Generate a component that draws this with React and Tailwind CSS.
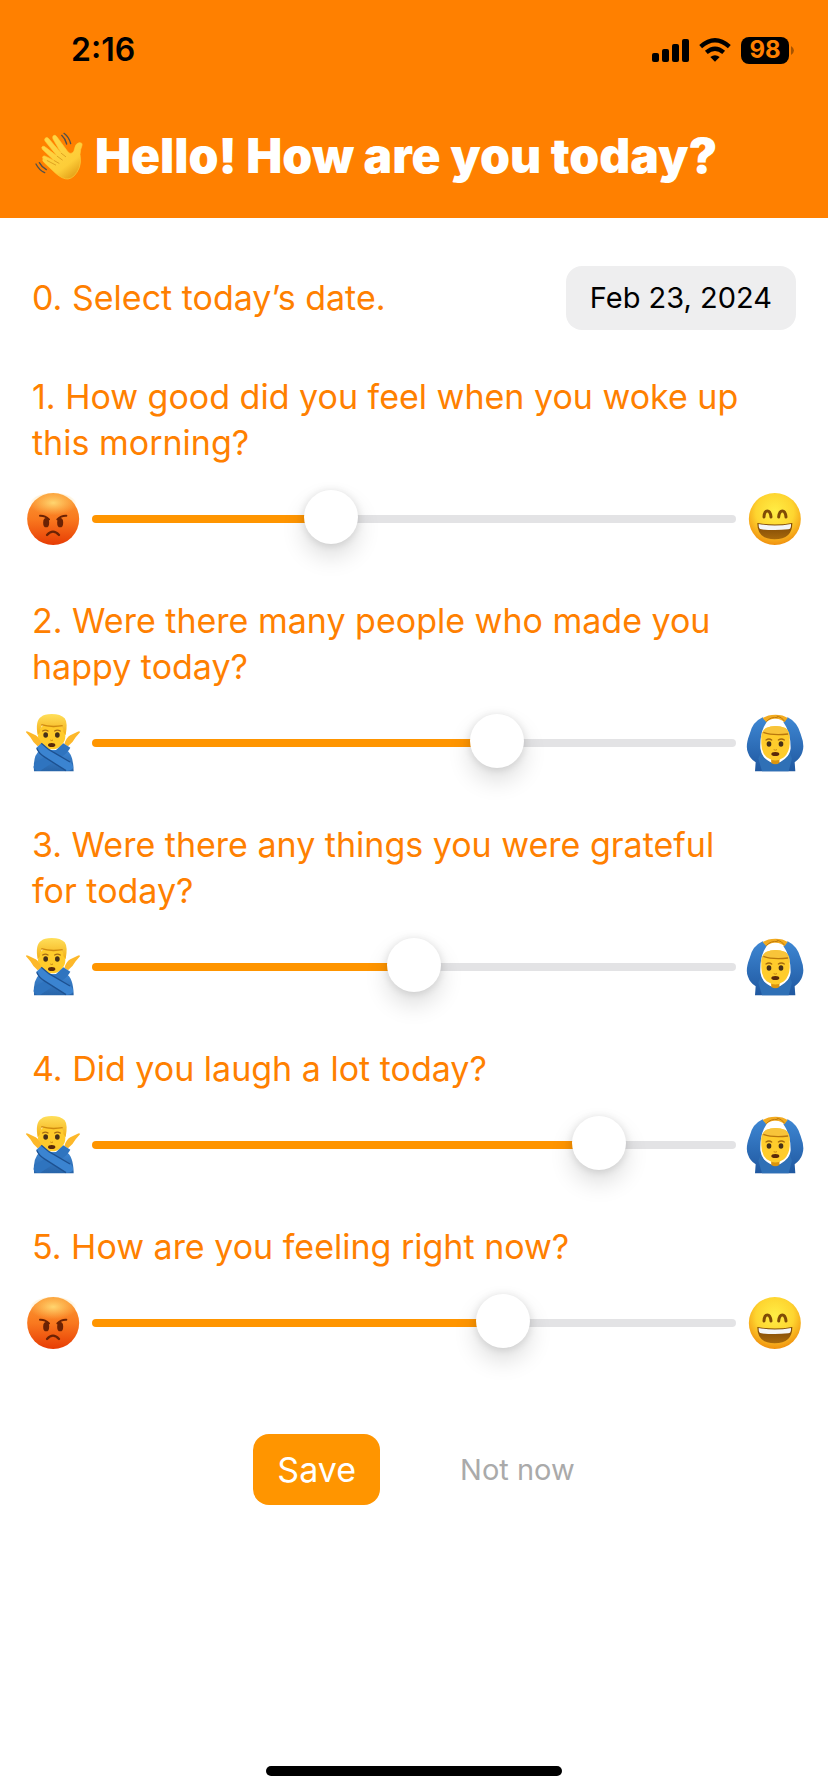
import { useState } from "react";

const EMOJI = "h-[58px] w-[54px] shrink-0 overflow-visible";

function WavingHand() {
  return (
    <svg viewBox="45 38 144 144" className="size-12 shrink-0" aria-hidden="true">
      <defs>
        <linearGradient id="handFill" x1="0" y1="0" x2="0.7" y2="1">
          <stop offset="0" stopColor="#ffd84a" />
          <stop offset="0.75" stopColor="#fdcd38" />
          <stop offset="1" stopColor="#e5a31a" />
        </linearGradient>
      </defs>
      <path
        d="M107 137 L71 120 Q65 115 69 111 Q73 108 79 112 L103 124 L67 90 Q63 84 68 81 Q72 79 77 84 L112 111 L75 65 Q72 57 78 55 Q83 53 87 59 L124 102 L99 59 Q96 51 102 48 Q107 46 111 53 L144 98 Q150 105 157 101 Q163 97 164 87 Q166 73 177 70 Q188 69 186 78 Q181 90 180 105 Q184 130 178 145 Q165 176 144 179 Q128 180 107 162 L73 130 Q66 124 69 118 Z"
        fill="url(#handFill)"
        stroke="#fdcd38"
        strokeWidth="2"
        strokeLinejoin="round"
      />
      <path d="M107 137 L82 124 M112 111 L127 122 M124 102 L137 112 M103 124 L117 132" stroke="#dfa322" strokeWidth="3" strokeLinecap="round" fill="none" />
      <path d="M125 48 Q136 58 140 74 M132 42 Q147 53 152 73 M58 130 Q65 143 79 151 M48 134 Q57 152 74 160" stroke="#54504a" strokeWidth="4" strokeLinecap="round" fill="none" />
    </svg>
  );
}

function AngryFace() {
  return (
    <svg viewBox="48 26 162 174" className={EMOJI} aria-hidden="true">
      <defs>
        <linearGradient id="angryFill" x1="0" y1="0" x2="0" y2="1">
          <stop offset="0" stopColor="#fb9a35" />
          <stop offset="0.5" stopColor="#f9791f" />
          <stop offset="1" stopColor="#e73c04" />
        </linearGradient>
        <radialGradient id="angryShine" cx="0.5" cy="0.4" r="0.5">
          <stop offset="0" stopColor="#ffd670" />
          <stop offset="1" stopColor="#ffc860" stopOpacity="0" />
        </radialGradient>
      </defs>
      <circle cx="129.500" cy="113" r="78" fill="url(#angryFill)" />
      <ellipse cx="129.500" cy="72" rx="72" ry="38" fill="url(#angryShine)" />
      <ellipse cx="108.500" cy="124" rx="9" ry="14" fill="#6b2204" />
      <ellipse cx="150.500" cy="124" rx="9" ry="14" fill="#6b2204" />
      <path d="M90 103 Q105 102 117 114 M169 103 Q154 102 142 114" stroke="#6b2204" strokeWidth="6" strokeLinecap="round" fill="none" />
      <path d="M111 161 Q129 141 147 161" stroke="#6b2204" strokeWidth="7" strokeLinecap="round" fill="none" />
    </svg>
  );
}

function GrinningFace() {
  return (
    <svg viewBox="39 26 162 174" className={EMOJI} aria-hidden="true">
      <defs>
        <radialGradient id="grinFill" cx="0.5" cy="0.36" r="0.66">
          <stop offset="0" stopColor="#ffee45" />
          <stop offset="0.55" stopColor="#fed530" />
          <stop offset="1" stopColor="#f08c0c" />
        </radialGradient>
        <linearGradient id="grinMouth" x1="0" y1="0" x2="0" y2="1">
          <stop offset="0" stopColor="#7a4505" />
          <stop offset="1" stopColor="#a8690c" />
        </linearGradient>
      </defs>
      <circle cx="119.500" cy="113" r="78" fill="url(#grinFill)" />
      <path d="M87 107 Q88 89 97 89 Q106 89 108 107 M131 107 Q133 89 142 89 Q151 89 153 107" stroke="#804c06" strokeWidth="9" strokeLinecap="round" fill="none" />
      <path d="M67 125 Q119 134 172 125 Q172 174 119 174 Q67 174 67 125 Z" fill="url(#grinMouth)" />
      <path d="M71 128 Q119 137 168 128 Q169 143 160 144 Q119 148 79 144 Q70 143 71 128 Z" fill="#f4f6f8" />
    </svg>
  );
}

function PersonGesturingNo() {
  return (
    <svg viewBox="48 42 162 174" className={EMOJI} aria-hidden="true">
      <defs>
        <linearGradient id="noShirt" x1="0" y1="0" x2="0" y2="1">
          <stop offset="0" stopColor="#3d86d3" />
          <stop offset="1" stopColor="#2864a8" />
        </linearGradient>
        <linearGradient id="noHair" x1="0" y1="0" x2="0" y2="1">
          <stop offset="0" stopColor="#ffdf5a" />
          <stop offset="1" stopColor="#f3ae17" />
        </linearGradient>
      </defs>
      <path d="M72 214 Q68 166 90 150 L168 150 Q190 160 191 214 Z" fill="url(#noShirt)" />
      <ellipse cx="125" cy="108" rx="41" ry="40" fill="#ffcb2b" />
      <path d="M83 106 Q75 60 94 50 Q102 42 125 42 Q152 42 164 55 Q174 68 167 106 L160 96 Q160 84 154 80 Q120 86 96 76 Q90 88 89 98 Z" fill="url(#noHair)" />
      <path d="M94 74 Q122 83 158 77" stroke="#cf8a10" strokeWidth="4" fill="none" />
      <path d="M98 93 Q106 88 114 93 M134 93 Q142 88 151 93" stroke="#a86c12" strokeWidth="4" strokeLinecap="round" fill="none" />
      <ellipse cx="107" cy="105" rx="7" ry="8" fill="#463019" />
      <ellipse cx="142" cy="105" rx="7" ry="8" fill="#463019" />
      <path d="M121 120 Q125 123 129 120" stroke="#c98512" strokeWidth="3" fill="none" />
      <ellipse cx="125" cy="135" rx="11" ry="6" fill="#5b2909" />
      <path d="M94 132 L83 139 Q68 126 61 112 L48 97 Q48 91 55 95 L77 106 Q88 112 94 132 Z" fill="#fdb82a" />
      <path d="M163 132 L174 139 Q190 126 197 112 L210 97 Q209 91 203 95 L181 106 Q169 112 163 132 Z" fill="#fdb82a" />
      <path d="M160 130 L181 143 Q172 160 155 170 L91 212 Q76 214 71 203 Q69 194 80 186 L139 149 Z" fill="#2f74bf" />
      <path d="M94 130 L79 143 Q88 162 102 170 L168 212 Q183 214 189 204 Q191 194 180 186 L117 149 Z" fill="#3b84d1" />
      <path d="M94 130 L117 149 L180 186 M80 145 Q88 162 102 170 L168 212" stroke="#1d5191" strokeWidth="4" fill="none" />
    </svg>
  );
}

function PersonGesturingOk() {
  return (
    <svg viewBox="39 42 162 174" className={EMOJI} aria-hidden="true">
      <defs>
        <linearGradient id="okShirt" x1="0" y1="0" x2="0" y2="1">
          <stop offset="0" stopColor="#3e87d3" />
          <stop offset="1" stopColor="#2058a0" />
        </linearGradient>
      </defs>
      <path d="M83 52 Q52 66 44 102 Q30 138 39 158 Q45 176 62 187 L60 214 L181 214 L179 187 Q197 174 202 157 Q210 136 197 102 Q187 66 158 52 L145 66 Q167 96 167 145 Q162 184 121 192 Q81 184 76 145 Q74 96 95 66 Z" fill="url(#okShirt)" />
      <path d="M77 158 Q88 180 121 193 Q153 180 165 158 L171 176 L161 214 L81 214 L70 176 Z" fill="#2f70b6" />
      <path d="M108 174 L134 174 L133 189 Q121 197 109 189 Z" fill="#dc950d" />
      <path d="M83 54 Q99 44 121 44 Q145 44 158 54 L148 67 Q137 55 121 56 Q105 55 94 67 Z" fill="#f2ab20" />
      <path d="M94 65 Q108 49 128 53 M125 48 Q140 50 149 64" stroke="#c07a0c" strokeWidth="3" fill="none" />
      <path d="M79 132 Q77 94 93 84 Q122 72 151 84 Q166 94 164 132 Q163 157 147 172 Q121 191 95 172 Q79 157 79 132 Z" fill="#ffcc2c" />
      <path d="M79 116 Q77 94 93 84 Q121 72 151 84 Q166 94 164 118 L157 103 Q118 110 86 100 Z" fill="#f8c43a" />
      <path d="M85 97 Q112 107 159 102" stroke="#b9770c" strokeWidth="4" fill="none" />
      <path d="M93 120 Q102 114 110 120 M130 120 Q139 114 148 120" stroke="#a66b0d" strokeWidth="4" strokeLinecap="round" fill="none" />
      <ellipse cx="102" cy="132" rx="7" ry="8" fill="#463019" />
      <ellipse cx="138" cy="132" rx="7" ry="8" fill="#463019" />
      <path d="M116 149 Q121 152 126 149" stroke="#c98512" strokeWidth="3" fill="none" />
      <ellipse cx="121" cy="162" rx="12" ry="6" fill="#5b2909" />
    </svg>
  );
}

const QUESTIONS = [
  { id: "q1", text: "1. How good did you feel when you woke up this morning?", value: 36, mood: true },
  { id: "q2", text: "2. Were there many people who made you happy today?", value: 64, mood: false },
  { id: "q3", text: "3. Were there any things you were grateful for today?", value: 50, mood: false },
  { id: "q4", text: "4. Did you laugh a lot today?", value: 81.4, mood: false },
  { id: "q5", text: "5. How are you feeling right now?", value: 65, mood: true },
];

function Question({ id, text, initial, mood }) {
  const [value, setValue] = useState(initial);
  return (
    <div className="flex flex-col gap-[26px]">
      <label htmlFor={id} className="max-w-[740px] pl-8 text-[34px] leading-[46px] text-[#ff8000]">
        {text}
      </label>
      <div className="flex h-[54px] items-center gap-3 px-[26px]">
        {mood ? <AngryFace /> : <PersonGesturingNo />}
        <input
          id={id}
          type="range"
          min="0"
          max="100"
          step="any"
          value={value}
          onChange={(e) => setValue(Number(e.target.value))}
          style={{ "--fill": `calc(27px + (100% - 54px) * ${value / 100})` }}
          className="h-[54px] min-w-0 flex-1 appearance-none bg-transparent [&::-webkit-slider-runnable-track]:h-2 [&::-webkit-slider-runnable-track]:rounded-full [&::-webkit-slider-runnable-track]:bg-[linear-gradient(to_right,#ff9500_var(--fill),#e3e3e5_var(--fill))] [&::-webkit-slider-thumb]:-mt-[25px] [&::-webkit-slider-thumb]:size-[54px] [&::-webkit-slider-thumb]:appearance-none [&::-webkit-slider-thumb]:rounded-full [&::-webkit-slider-thumb]:bg-white [&::-webkit-slider-thumb]:shadow-[0_1px_8px_rgba(0,0,0,0.12),0_12px_24px_rgba(0,0,0,0.14)]"
        />
        {mood ? <GrinningFace /> : <PersonGesturingOk />}
      </div>
    </div>
  );
}

function StatusBar() {
  return (
    <div className="flex h-[100px] items-center justify-between pr-[34px] pl-[71px] text-black">
      <span className="text-[32px] leading-10 font-semibold">2:16</span>
      <div className="flex items-center gap-[10px]">
        <svg viewBox="0 0 37 23" className="h-[23px] w-[37px]" aria-label="Signal" role="img">
          <rect x="0" y="14" width="7" height="9" rx="2" />
          <rect x="10" y="10" width="7" height="13" rx="2" />
          <rect x="20" y="5" width="7" height="18" rx="2" />
          <rect x="30" y="0" width="7" height="23" rx="2" />
        </svg>
        <svg viewBox="0 0 96 72" className="h-6 w-8" aria-label="Wi-Fi" role="img">
          <path d="M5 26 Q48 -12 91 26 M22 43 Q48 21 74 43" stroke="black" strokeWidth="13" fill="none" />
          <path d="M48 71 L34 57 Q48 46 62 57 Z" />
        </svg>
        <div className="flex items-center gap-[2px]">
          <span className="flex h-[27px] w-12 items-center justify-center rounded-lg bg-black text-2xl leading-7 font-bold text-[#ff8000]">
            98
          </span>
          <svg viewBox="0 0 3 9" className="h-[9px] w-[3px]" aria-hidden="true">
            <path d="M0 0 Q3 2 3 4.500 Q3 7 0 9 Z" fill="#a65300" />
          </svg>
        </div>
      </div>
    </div>
  );
}

export default function App() {
  return (
    <div className="flex min-h-screen flex-col bg-white font-['Inter',sans-serif]">
      <header className="bg-[#ff8000] pb-[30px]">
        <StatusBar />
        <div className="flex items-center gap-3 px-[35px] pt-6">
          <WavingHand />
          <h1 className="text-5xl leading-[64px] font-black text-white">Hello! How are you today?</h1>
        </div>
      </header>

      <main className="flex flex-col pt-12">
        <div className="flex items-center justify-between px-8">
          <label htmlFor="date" className="text-[34px] leading-[46px] text-[#ff8000]">
            0. Select today’s date.
          </label>
          <button id="date" type="button" className="h-16 rounded-2xl bg-[#eeeeef] px-6 text-[29px] leading-10 text-black">
            Feb 23, 2024
          </button>
        </div>

        <div className="mt-11 flex flex-col gap-[52px]">
          {QUESTIONS.map((q) => (
            <Question key={q.id} id={q.id} text={q.text} initial={q.value} mood={q.mood} />
          ))}
        </div>

        <div className="mt-[84px] flex items-center justify-center gap-20">
          <button type="button" className="h-[71px] rounded-2xl bg-[#ff9500] px-6 text-[34px] text-white">
            Save
          </button>
          <button type="button" className="text-[29px] leading-10 text-[#aaaaaa]">
            Not now
          </button>
        </div>
      </main>

      <div className="mt-auto flex justify-center pb-4">
        <div className="h-[10px] w-[296px] rounded-full bg-black" />
      </div>
    </div>
  );
}
